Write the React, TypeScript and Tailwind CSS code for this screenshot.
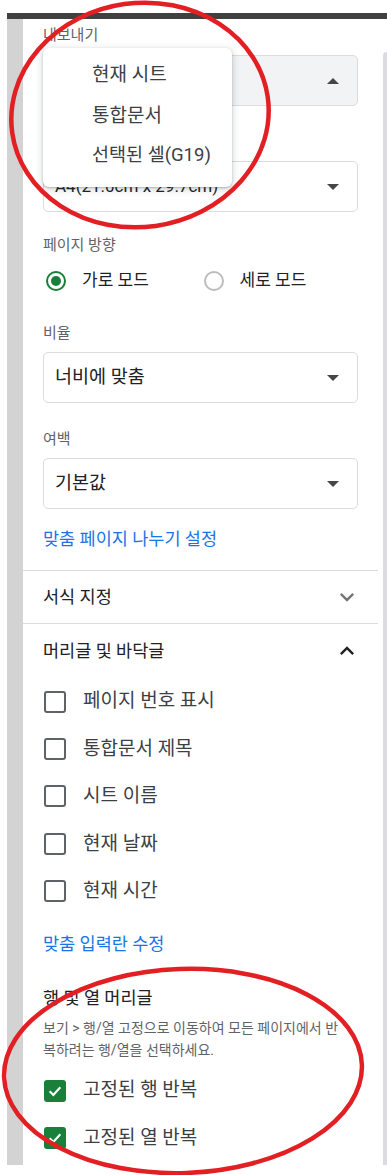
import React from "react";

function Caret({ up = false }: { up?: boolean }) {
  return (
    <svg width="12" height="6" viewBox="0 0 12 6" className="shrink-0">
      {up ? <path d="M0 6 L6 0 L12 6 Z" fill="#444746" /> : <path d="M0 0 L6 6 L12 0 Z" fill="#444746" />}
    </svg>
  );
}

function Select({ value, open = false, size = "text-[18.5px]" }: { value: string; open?: boolean; size?: string }) {
  return (
    <div
      className={`h-[51px] flex items-center justify-between pl-[11px] pr-[18px] border border-[#dadce0] rounded-[5px] ${
        open ? "bg-[#f1f3f4]" : "bg-white"
      }`}
    >
      <span className={`${size} text-[#202124]`}>{value}</span>
      <Caret up={open} />
    </div>
  );
}

function Label({ children }: { children: React.ReactNode }) {
  return <div className="h-5 leading-5 text-[15px] text-[#5f6368]">{children}</div>;
}

function Radio({ label, checked = false }: { label: string; checked?: boolean }) {
  return (
    <div className="w-[160px] flex items-center gap-4 pl-[3px]">
      <span
        className={`w-5 h-5 rounded-full border-2 flex items-center justify-center ${
          checked ? "border-[#188038]" : "border-[#bdbdbd]"
        }`}
      >
        {checked && <span className="w-[10px] h-[10px] rounded-full bg-[#188038]" />}
      </span>
      <span className="text-[17px] text-[#202124]">{label}</span>
    </div>
  );
}

function Checkbox({ label, checked = false }: { label: string; checked?: boolean }) {
  return (
    <div className="h-[47.4px] flex items-center gap-[17px] pl-[21px]">
      {checked ? (
        <span className="w-[22px] h-[22px] rounded-[3px] bg-[#188038] flex items-center justify-center">
          <svg width="16" height="16" viewBox="0 0 24 24">
            <path d="M4 12.5 L9.5 18 L20 6.5" fill="none" stroke="white" strokeWidth="3.2" />
          </svg>
        </span>
      ) : (
        <span className="w-[22px] h-[22px] rounded-[3px] border-2 border-[#5f6368]" />
      )}
      <span className="text-[19px] text-[#3c4043]">{label}</span>
    </div>
  );
}

function Chevron({ up = false }: { up?: boolean }) {
  return (
    <svg width="28" height="28" viewBox="0 0 24 24">
      {up ? (
        <path d="M7.41 15.41 12 10.83l4.59 4.58L18 14l-6-6-6 6z" fill="#202124" />
      ) : (
        <path d="M7.41 8.59 12 13.17l4.59-4.58L18 10l-6 6-6-6z" fill="#757575" />
      )}
    </svg>
  );
}

const exportItems = [
  { text: "현재 시트", size: "text-[19px]" },
  { text: "통합문서", size: "text-[19px]" },
  { text: "선택된 셀(G19)", size: "text-[18.5px]" },
];
const headerFooter = ["페이지 번호 표시", "통합문서 제목", "시트 이름", "현재 날짜", "현재 시간"];

export default function App() {
  return (
    <div className="relative w-[387px] h-[1175px] bg-white overflow-hidden font-[Roboto,'Noto_Sans_CJK_KR',sans-serif]">
      <div className="h-[13px]" />
      <div className="ml-[7px] h-[6px] bg-[#404040]" />
      <div className="ml-[7px] flex h-[1146px]">
        <div className="w-4 bg-[#d3d3d3]" />
        <div className="relative w-[355px]">
          <div className="px-5 pt-[6px]">
            <Label>내보내기</Label>
            <div className="mt-[10px]">
              <Select value="" open />
            </div>
            <div className="mt-[26px]">
              <Label>용지 크기</Label>
            </div>
            <div className="mt-[9px]">
              <Select value="A4(21.0cm x 29.7cm)" size="text-[17px]" />
            </div>
            <div className="mt-[23px]">
              <Label>페이지 방향</Label>
            </div>
            <div className="mt-[14px] h-6 flex items-center">
              <Radio label="가로 모드" checked />
              <Radio label="세로 모드" />
            </div>
            <div className="mt-[30px]">
              <Label>비율</Label>
            </div>
            <div className="mt-[9px]">
              <Select value="너비에 맞춤" />
            </div>
            <div className="mt-[26px]">
              <Label>여백</Label>
            </div>
            <div className="mt-[9px]">
              <Select value="기본값" />
            </div>
            <div className="mt-5 h-5 leading-5 text-[17.5px] text-[#1a73e8]">맞춤 페이지 나누기 설정</div>
          </div>

          <div className="mt-[21px] border-t border-[#dadce0]" />
          <div className="h-[52px] flex items-center justify-between pl-5 pr-[17px]">
            <span className="text-[17.5px] text-[#202124]">서식 지정</span>
            <Chevron />
          </div>
          <div className="border-t border-[#dadce0]" />
          <div className="h-[53px] flex items-center justify-between pl-5 pr-[17px] pt-[1px]">
            <span className="text-[17.5px] text-[#202124]">머리글 및 바닥글</span>
            <Chevron up />
          </div>
          <div className="mt-[1px]">
            {headerFooter.map((h) => (
              <Checkbox key={h} label={h} />
            ))}
          </div>
          <div className="px-5">
            <div className="mt-[19px] h-5 leading-5 text-[17.5px] text-[#1a73e8]">맞춤 입력란 수정</div>
            <div className="mt-[34px] h-5 leading-5 text-[17.5px] text-[#202124]">행 및 열 머리글</div>
            <p className="mt-[9px] text-[14px] leading-[22px] text-[#5f6368] whitespace-nowrap">
              보기 &gt; 행/열 고정으로 이동하여 모든 페이지에서 반
              <br />
              복하려는 행/열을 선택하세요.
            </p>
          </div>
          <div className="mt-[6px]">
            <Checkbox label="고정된 행 반복" checked />
            <Checkbox label="고정된 열 반복" checked />
          </div>

          <div className="absolute left-5 top-[29px] w-[189px] pt-[7px] pb-[10px] bg-white rounded-[6px] shadow-[0_2px_6px_2px_rgba(60,64,67,0.15),0_1px_2px_rgba(60,64,67,0.3)]">
            {exportItems.map((item) => (
              <div key={item.text} className={`h-[40.5px] flex items-center pl-[49px] ${item.size} text-[#3c4043]`}>
                {item.text}
              </div>
            ))}
          </div>
        </div>
        <div className="ml-[5px] mt-[33px] w-1 bg-[#dadce0] rounded-tl-[6px]" />
      </div>

      <svg className="absolute inset-0 pointer-events-none" width="387" height="1175">
        <ellipse cx="140" cy="115" rx="129" ry="112" transform="rotate(-8 140 115)" fill="none" stroke="#e21f23" strokeWidth="4.5" />
        <ellipse cx="183" cy="1071" rx="179" ry="102" transform="rotate(-2 183 1071)" fill="none" stroke="#e21f23" strokeWidth="4.5" />
      </svg>
    </div>
  );
}
